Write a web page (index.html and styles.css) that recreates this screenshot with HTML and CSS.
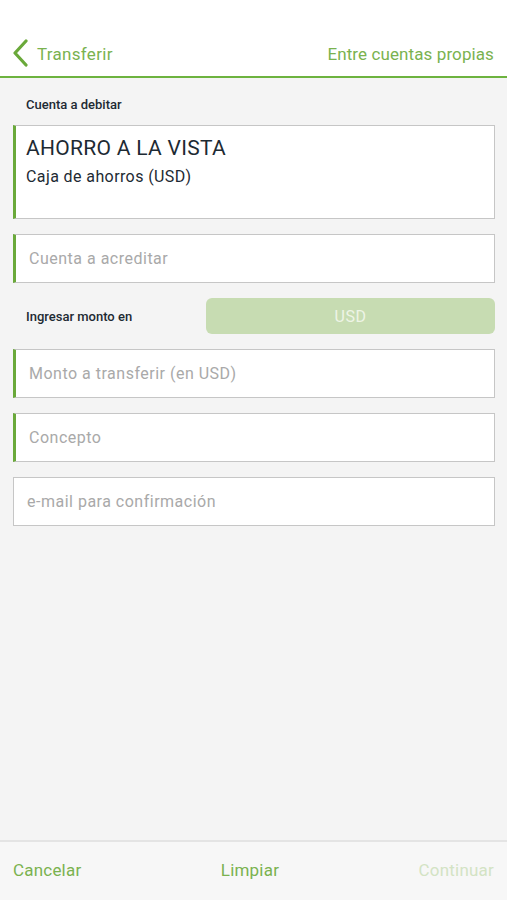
FILE: index.html
```html
<!DOCTYPE html>
<html lang="es">
<head>
<meta charset="utf-8">
<title>Transferir</title>
<link rel="stylesheet" href="styles.css">
</head>
<body>
<div class="app">
  <header class="topbar">
    <div class="back">
      <svg class="chev" width="18" height="28" viewBox="0 0 18 28"><path d="M15 2 L4 14 L15 26" fill="none" stroke="#6aa93a" stroke-width="3.2" stroke-linecap="round" stroke-linejoin="round"/></svg>
      <span>Transferir</span>
    </div>
    <div class="subtitle">Entre cuentas propias</div>
  </header>
  <main class="content">
    <div class="label">Cuenta a debitar</div>
    <div class="field req account">
      <div class="acc-name">AHORRO A LA VISTA</div>
      <div class="acc-type">Caja de ahorros (USD)</div>
    </div>
    <div class="field req"><span class="ph">Cuenta a acreditar</span></div>
    <div class="currency-row">
      <div class="label inline">Ingresar monto en</div>
      <div class="currency-btn">USD</div>
    </div>
    <div class="field req"><span class="ph">Monto a transferir (en USD)</span></div>
    <div class="field req"><span class="ph">Concepto</span></div>
    <div class="field"><span class="ph">e-mail para confirmación</span></div>
  </main>
  <footer class="bottombar">
    <span class="act">Cancelar</span>
    <span class="act">Limpiar</span>
    <span class="act disabled">Continuar</span>
  </footer>
</div>
</body>
</html>
```
FILE: styles.css
```css
* { box-sizing: border-box; }
html, body { margin: 0; padding: 0; }
body {
  font-family: Roboto, "Liberation Sans", sans-serif;
  background: #f4f4f4;
}
.app {
  width: 507px;
  height: 900px;
  display: flex;
  flex-direction: column;
}
.topbar {
  height: 78px;
  background: #fff;
  border-bottom: 2px solid #6db33f;
  display: flex;
  align-items: flex-end;
  justify-content: space-between;
  padding: 0 13px 8px 11px;
}
.back {
  display: flex;
  align-items: center;
  gap: 8px;
  color: #7ab24f;
  font-size: 17px;
  letter-spacing: 0.3px;
}
.chev { display: block; margin-bottom: 1px; }
.subtitle {
  color: #7ab24f;
  font-size: 17px;
  letter-spacing: 0.1px;
  padding-bottom: 4px;
}
.content {
  flex: 1;
  padding: 19px 12px 0 13px;
  display: flex;
  flex-direction: column;
}
.label {
  font-size: 13px;
  font-weight: 500;
  color: #1d2a33;
  padding-left: 13px;
  margin-bottom: 13px;
}
.label.inline { margin-bottom: 0; }
.field {
  background: #fff;
  border: 1px solid #c6c6c6;
  height: 49px;
  display: flex;
  align-items: center;
  padding-left: 13px;
  margin-bottom: 15px;
}
.field.req {
  border-left: 3px solid #6aa93a;
}
.account {
  height: 94px;
  flex-direction: column;
  align-items: flex-start;
  justify-content: flex-start;
  padding-top: 8px;
  padding-left: 10px;
}
.acc-name {
  font-size: 21px;
  letter-spacing: 0.3px;
  color: #1d2a33;
  line-height: 28px;
}
.acc-type {
  font-size: 16px;
  letter-spacing: 0.4px;
  color: #1d2a33;
  line-height: 30px;
}
.ph {
  font-size: 16px;
  letter-spacing: 0.5px;
  color: #a9a9a9;
}
.currency-row {
  display: flex;
  align-items: center;
  justify-content: space-between;
  margin: 0 0 15px 0;
}
.currency-btn {
  width: 289px;
  height: 36px;
  border-radius: 6px;
  background: #c7dcb2;
  color: #eef4e6;
  font-size: 16px;
  letter-spacing: 0.5px;
  display: flex;
  align-items: center;
  justify-content: center;
}
.bottombar {
  height: 60px;
  border-top: 2px solid #e4e4e4;
  background: #f7f7f7;
  display: flex;
  align-items: center;
  justify-content: space-between;
  padding: 0 13px 2px 13px;
  font-size: 17px;
  letter-spacing: 0.2px;
}
.act { color: #7ab24f; }
.act.disabled { color: #d3e3c4; }
```
